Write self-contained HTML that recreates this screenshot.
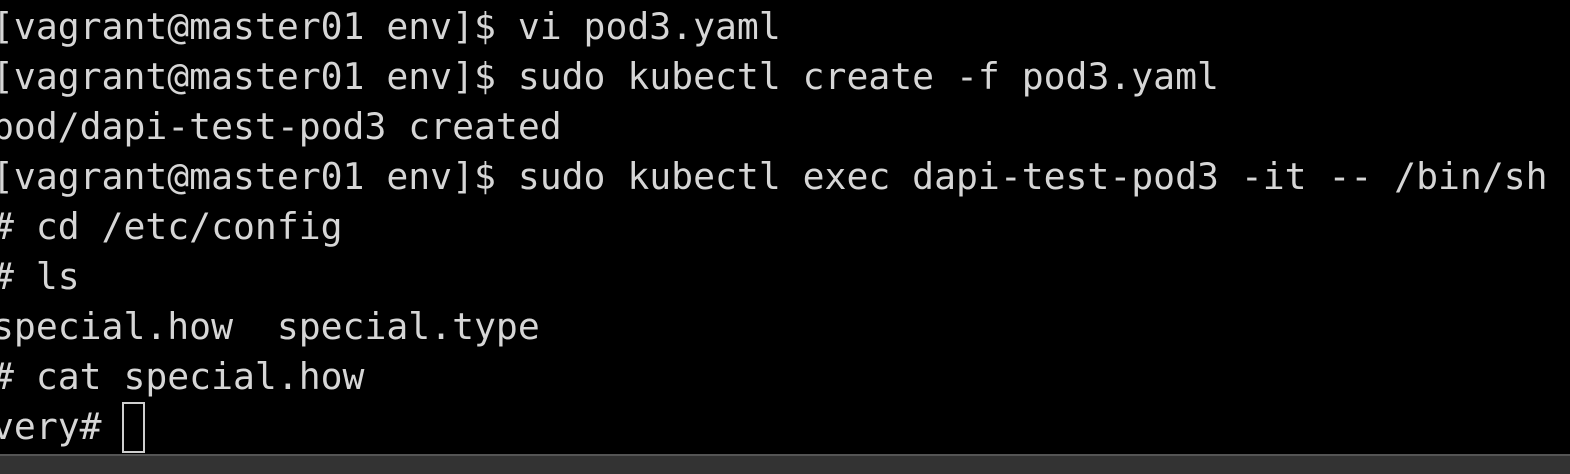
<!DOCTYPE html>
<html><head><meta charset="utf-8"><style>
html,body{margin:0;padding:0;background:#000;width:1570px;height:472px;overflow:hidden;}
pre{position:absolute;left:-8px;top:2px;margin:0;font-family:"DejaVu Sans Mono","Liberation Mono",monospace;font-size:36.4px;line-height:50px;color:#d6d6d6;white-space:pre;}
.cur{position:absolute;left:122px;top:402px;width:19px;height:47px;border:2px solid #cfcfcf;}
.bar{position:absolute;left:0;top:454px;width:1570px;height:18px;background:#333;border-top:2px solid #555;}
</style></head><body>
<pre>[vagrant@master01 env]$ vi pod3.yaml
[vagrant@master01 env]$ sudo kubectl create -f pod3.yaml
pod/dapi-test-pod3 created
[vagrant@master01 env]$ sudo kubectl exec dapi-test-pod3 -it -- /bin/sh
# cd /etc/config
# ls
special.how  special.type
# cat special.how
very# </pre>
<div class="cur"></div>
<div class="bar"></div>
</body></html>
